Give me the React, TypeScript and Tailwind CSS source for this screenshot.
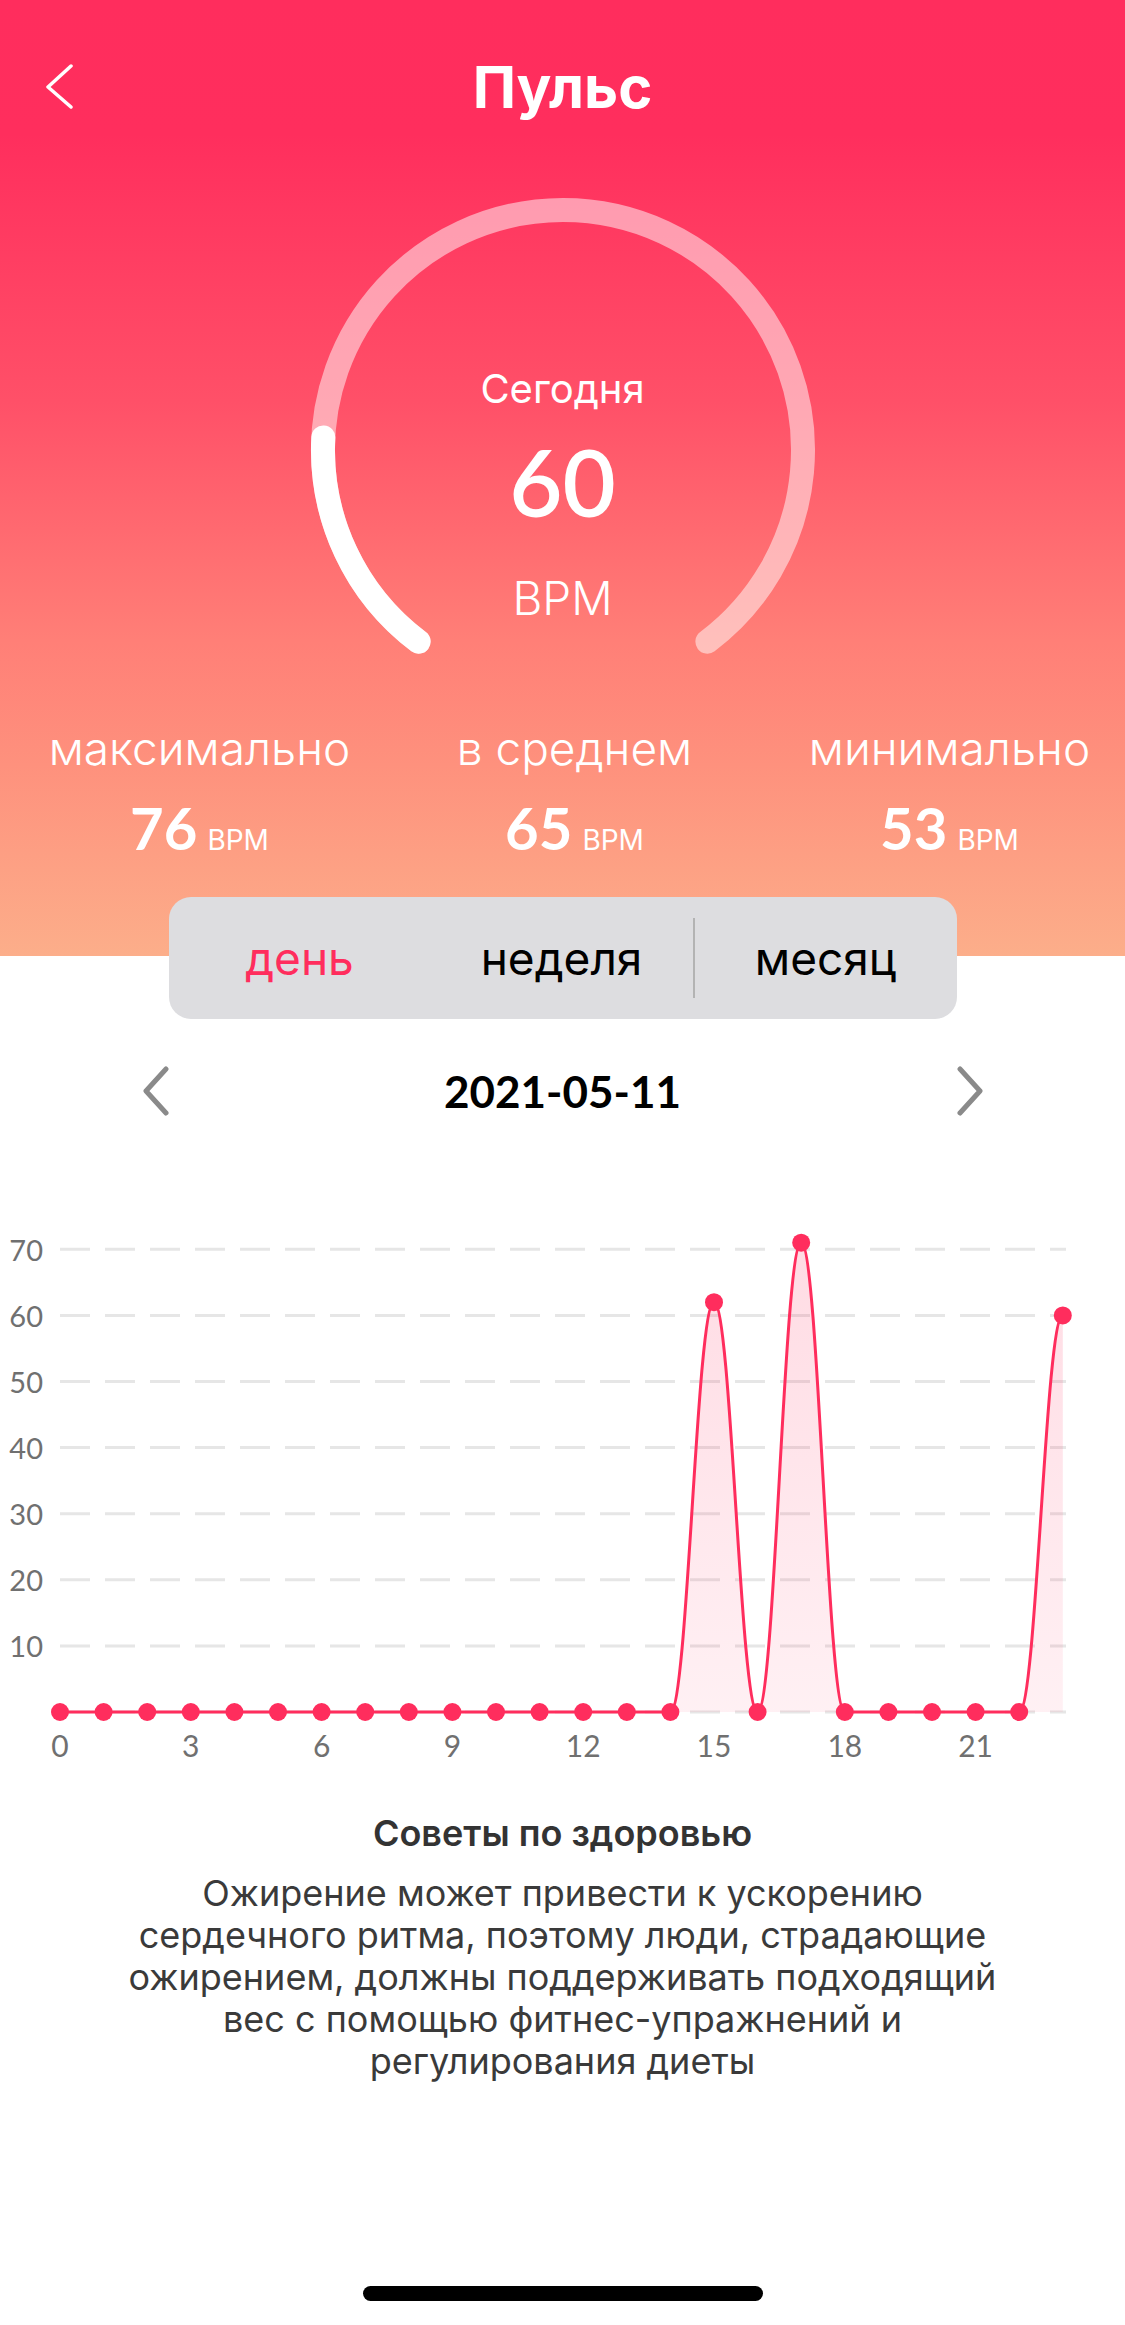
import React from "react";

const HOURS = Array.from({ length: 24 }, (_, h) => h);
const PEAKS: Record<number, number> = { 15: 62, 17: 71, 23: 60 };
const VALUES = HOURS.map((h) => PEAKS[h] ?? 0);

// chart geometry (svg starts at page y = 1200)
const xAt = (h: number) => 60 + h * 43.6;
const yAt = (v: number) => 512 - v * 6.61;

function linePath() {
  let d = `M${xAt(0)} ${yAt(VALUES[0])}`;
  for (let i = 1; i < VALUES.length; i++) {
    const x0 = xAt(i - 1);
    const x1 = xAt(i);
    const y0 = yAt(VALUES[i - 1]);
    const y1 = yAt(VALUES[i]);
    const k = (x1 - x0) * 0.4;
    d += ` C${x0 + k} ${y0} ${x1 - k} ${y1} ${x1} ${y1}`;
  }
  return d;
}

function Chevron({ dir, className }: { dir: "left" | "right"; className?: string }) {
  return (
    <svg width="26" height="50" viewBox="0 0 26 50" className={className}>
      <path
        d={dir === "left" ? "M23 3 L3 25 L23 47" : "M3 3 L23 25 L3 47"}
        fill="none"
        stroke="currentColor"
        strokeWidth="5"
        strokeLinecap="round"
        strokeLinejoin="round"
      />
    </svg>
  );
}

function Gauge() {
  return (
    <div className="relative mx-auto mt-[53px] h-[520px] w-[520px]">
      <svg width="520" height="520" viewBox="0 0 520 520">
        <path
          d="M115.6 451.7 A240 240 0 1 1 404.4 451.7"
          fill="none"
          stroke="rgba(255,255,255,0.5)"
          strokeWidth="24"
          strokeLinecap="round"
        />
        <path
          d="M115.6 451.7 A240 240 0 0 1 20.3 247.4"
          fill="none"
          stroke="#ffffff"
          strokeWidth="24"
          strokeLinecap="round"
        />
      </svg>
      <div className="absolute inset-x-0 top-[174px] flex flex-col items-center text-white">
        <p className="text-[40px] leading-[50px] font-['Inter',sans-serif]">Сегодня</p>
        <p className="mt-[18px] text-[92px] leading-[100px] font-semibold font-['Lato',sans-serif]">60</p>
        <p className="mt-[36px] text-[46px] leading-[60px] font-light font-['Inter',sans-serif]">BPM</p>
      </div>
    </div>
  );
}

const STATS = [
  { label: "максимально", value: "76" },
  { label: "в среднем", value: "65" },
  { label: "минимально", value: "53" },
];

function Stats() {
  return (
    <div className="mt-[8px] grid grid-cols-[375px_375px_375px] pl-[12px] text-white">
      {STATS.map((s) => (
        <div key={s.label} className="flex flex-col items-center">
          <p className="text-[46px] leading-[60px] font-light font-['Inter',sans-serif]">{s.label}</p>
          <p className="mt-[15px] flex items-baseline leading-[70px]">
            <span className="text-[58px] font-bold font-['Lato',sans-serif]">{s.value}</span>
            <span className="ml-[10px] text-[28px] font-['Inter',sans-serif]">BPM</span>
          </p>
        </div>
      ))}
    </div>
  );
}

function Segments() {
  return (
    <div className="relative mx-auto -mt-[59px] flex h-[122px] w-[788px] items-center rounded-[22px] bg-[#dddde0] font-['Inter',sans-serif] text-[46px]">
      <div className="flex-1 text-center text-[#ff2d5d]">день</div>
      <div className="flex-1 text-center text-black">неделя</div>
      <div className="h-[80px] w-[2px] bg-[#b3b3b3]" />
      <div className="flex-1 text-center text-black">месяц</div>
    </div>
  );
}

function Chart() {
  const line = linePath();
  const area = `${line} L${xAt(23)} ${yAt(0)} L${xAt(0)} ${yAt(0)} Z`;
  return (
    <svg width="1125" height="580" viewBox="0 0 1125 580" className="mt-[73px] block font-['Lato',sans-serif]">
      <defs>
        <linearGradient id="fillPink" x1="0" y1="0" x2="0" y2="1">
          <stop offset="0%" stopColor="#ff2d5d" stopOpacity="0.17" />
          <stop offset="100%" stopColor="#ff2d5d" stopOpacity="0.07" />
        </linearGradient>
      </defs>
      {[0, 10, 20, 30, 40, 50, 60, 70].map((v) => (
        <line
          key={v}
          x1="60"
          x2="1066"
          y1={yAt(v)}
          y2={yAt(v)}
          stroke="#e6e6e6"
          strokeWidth="3"
          strokeDasharray="30 15"
        />
      ))}
      {[10, 20, 30, 40, 50, 60, 70].map((v) => (
        <text key={v} x="43" y={yAt(v)} textAnchor="end" dominantBaseline="central" fontSize="29" fill="#707070">
          {v}
        </text>
      ))}
      {[0, 3, 6, 9, 12, 15, 18, 21].map((h) => (
        <text key={h} x={xAt(h)} y="545" textAnchor="middle" dominantBaseline="central" fontSize="30" fill="#707070">
          {h}
        </text>
      ))}
      <path d={area} fill="url(#fillPink)" />
      <path d={line} fill="none" stroke="#ff2d5d" strokeWidth="3" />
      {VALUES.map((v, h) => (
        <circle key={h} cx={xAt(h)} cy={yAt(v)} r="9" fill="#ff2d5d" />
      ))}
    </svg>
  );
}

export default function App() {
  return (
    <div className="min-h-[2325px] w-[1125px] overflow-hidden bg-white">
      <header className="h-[956px] pt-[37px] bg-[linear-gradient(180deg,#ff2d5d_0%,#ff2e5d_14%,#ff5068_42%,#ff7f77_67%,#fe917d_80%,#fcae8a_100%)]">
        <div className="relative flex h-[100px] items-center justify-center">
          <svg width="30" height="46" viewBox="0 0 30 46" className="absolute left-[45px] text-white">
            <path d="M26 2 L3 23 L26 43" fill="none" stroke="currentColor" strokeWidth="3.5" strokeLinecap="round" strokeLinejoin="round" />
          </svg>
          <h1 className="text-[58px] font-bold leading-[100px] text-white font-['Inter',sans-serif]">Пульс</h1>
        </div>
        <Gauge />
        <Stats />
      </header>

      <Segments />

      <div className="mx-auto mt-[36px] flex h-[72px] w-[840px] items-center justify-between">
        <Chevron dir="left" className="text-[#8a8a8a]" />
        <p className="text-[44px] font-bold text-black font-['Lato',sans-serif]">2021-05-11</p>
        <Chevron dir="right" className="text-[#8a8a8a]" />
      </div>

      <Chart />

      <section className="mt-[28px] text-center font-['Inter',sans-serif]">
        <h2 className="text-[36px] font-semibold leading-[50px] text-[#333333]">Советы по здоровью</h2>
        <p className="mt-[14px] text-[36px] leading-[42px] text-[#3a3a3a]">
          Ожирение может привести к ускорению
          <br />
          сердечного ритма, поэтому люди, страдающие
          <br />
          ожирением, должны поддерживать подходящий
          <br />
          вес с помощью фитнес-упражнений и
          <br />
          регулирования диеты
        </p>
      </section>

      <div className="mx-auto mt-[204px] h-[15px] w-[400px] rounded-full bg-black" />
    </div>
  );
}
